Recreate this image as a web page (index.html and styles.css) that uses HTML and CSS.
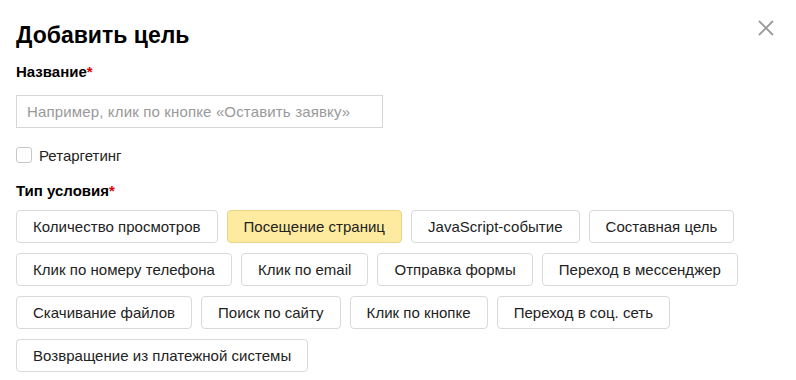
FILE: index.html
```html
<!DOCTYPE html>
<html lang="ru">
<head>
<meta charset="utf-8">
<link rel="stylesheet" href="styles.css">
</head>
<body>
<div class="dialog">
  <h1 class="title">Добавить цель</h1>
  <button class="close" aria-label="Закрыть">
    <svg width="16" height="16" viewBox="0 0 16 16"><path d="M1 1L15 15M15 1L1 15" stroke="#9a9a9a" stroke-width="1.8" fill="none"/></svg>
  </button>
  <div class="label">Название<span class="req">*</span></div>
  <div class="input">Например, клик по кнопке «Оставить заявку»</div>
  <label class="check"><span class="box"></span><span class="check-text">Ретаргетинг</span></label>
  <div class="label label-type">Тип условия<span class="req">*</span></div>
  <div class="options">
    <span class="opt">Количество просмотров</span>
    <span class="opt opt-active">Посещение страниц</span>
    <span class="opt">JavaScript-событие</span>
    <span class="opt">Составная цель</span>
    <span class="opt">Клик по номеру телефона</span>
    <span class="opt">Клик по email</span>
    <span class="opt">Отправка формы</span>
    <span class="opt">Переход в мессенджер</span>
    <span class="opt">Скачивание файлов</span>
    <span class="opt">Поиск по сайту</span>
    <span class="opt">Клик по кнопке</span>
    <span class="opt">Переход в соц. сеть</span>
    <span class="opt">Возвращение из платежной системы</span>
  </div>
</div>
</body>
</html>
```
FILE: styles.css
```css
html, body {
  margin: 0;
  padding: 0;
  background: #fff;
}
body {
  font-family: "Liberation Sans", Arial, sans-serif;
  color: #222;
}
.dialog {
  position: relative;
  padding: 21px 16px 0 16px;
  width: 764px;
}
.title {
  margin: 0;
  font-size: 23px;
  line-height: 28px;
  font-weight: 700;
  color: #000;
}
.close {
  position: absolute;
  top: 20px;
  right: 22px;
  width: 16px;
  height: 16px;
  padding: 0;
  border: 0;
  background: none;
  display: block;
}
.close svg { display: block; }
.label {
  margin-top: 14px;
  font-size: 15px;
  line-height: 18px;
  font-weight: 700;
  color: #000;
}
.req { color: #d00; }
.input {
  margin-top: 14px;
  box-sizing: border-box;
  width: 367px;
  height: 33px;
  border: 1px solid #d6d6d6;
  padding: 0 10px;
  font-size: 15px;
  line-height: 31px;
  letter-spacing: 0.15px;
  color: #999;
}
.check {
  margin-top: 17px;
  display: flex;
  align-items: center;
  gap: 7px;
  height: 20px;
  font-size: 15px;
  color: #222;
}
.box {
  box-sizing: border-box;
  width: 16px;
  height: 16px;
  border: 1px solid #c8c8c8;
  border-radius: 3px;
  background: #fff;
}
.label-type {
  margin-top: 17px;
}
.options {
  margin-top: 10px;
  display: flex;
  flex-wrap: wrap;
  gap: 10px 9px;
  width: 750px;
}
.opt {
  box-sizing: border-box;
  height: 33px;
  padding: 0 16px;
  border: 1px solid #d9d9d9;
  border-radius: 4px;
  font-size: 15px;
  line-height: 31px;
  letter-spacing: 0.03px;
  color: #222;
  background: #fff;
  white-space: nowrap;
}
.opt-active {
  background: #ffeba0;
  border-color: #e8d389;
}
```
